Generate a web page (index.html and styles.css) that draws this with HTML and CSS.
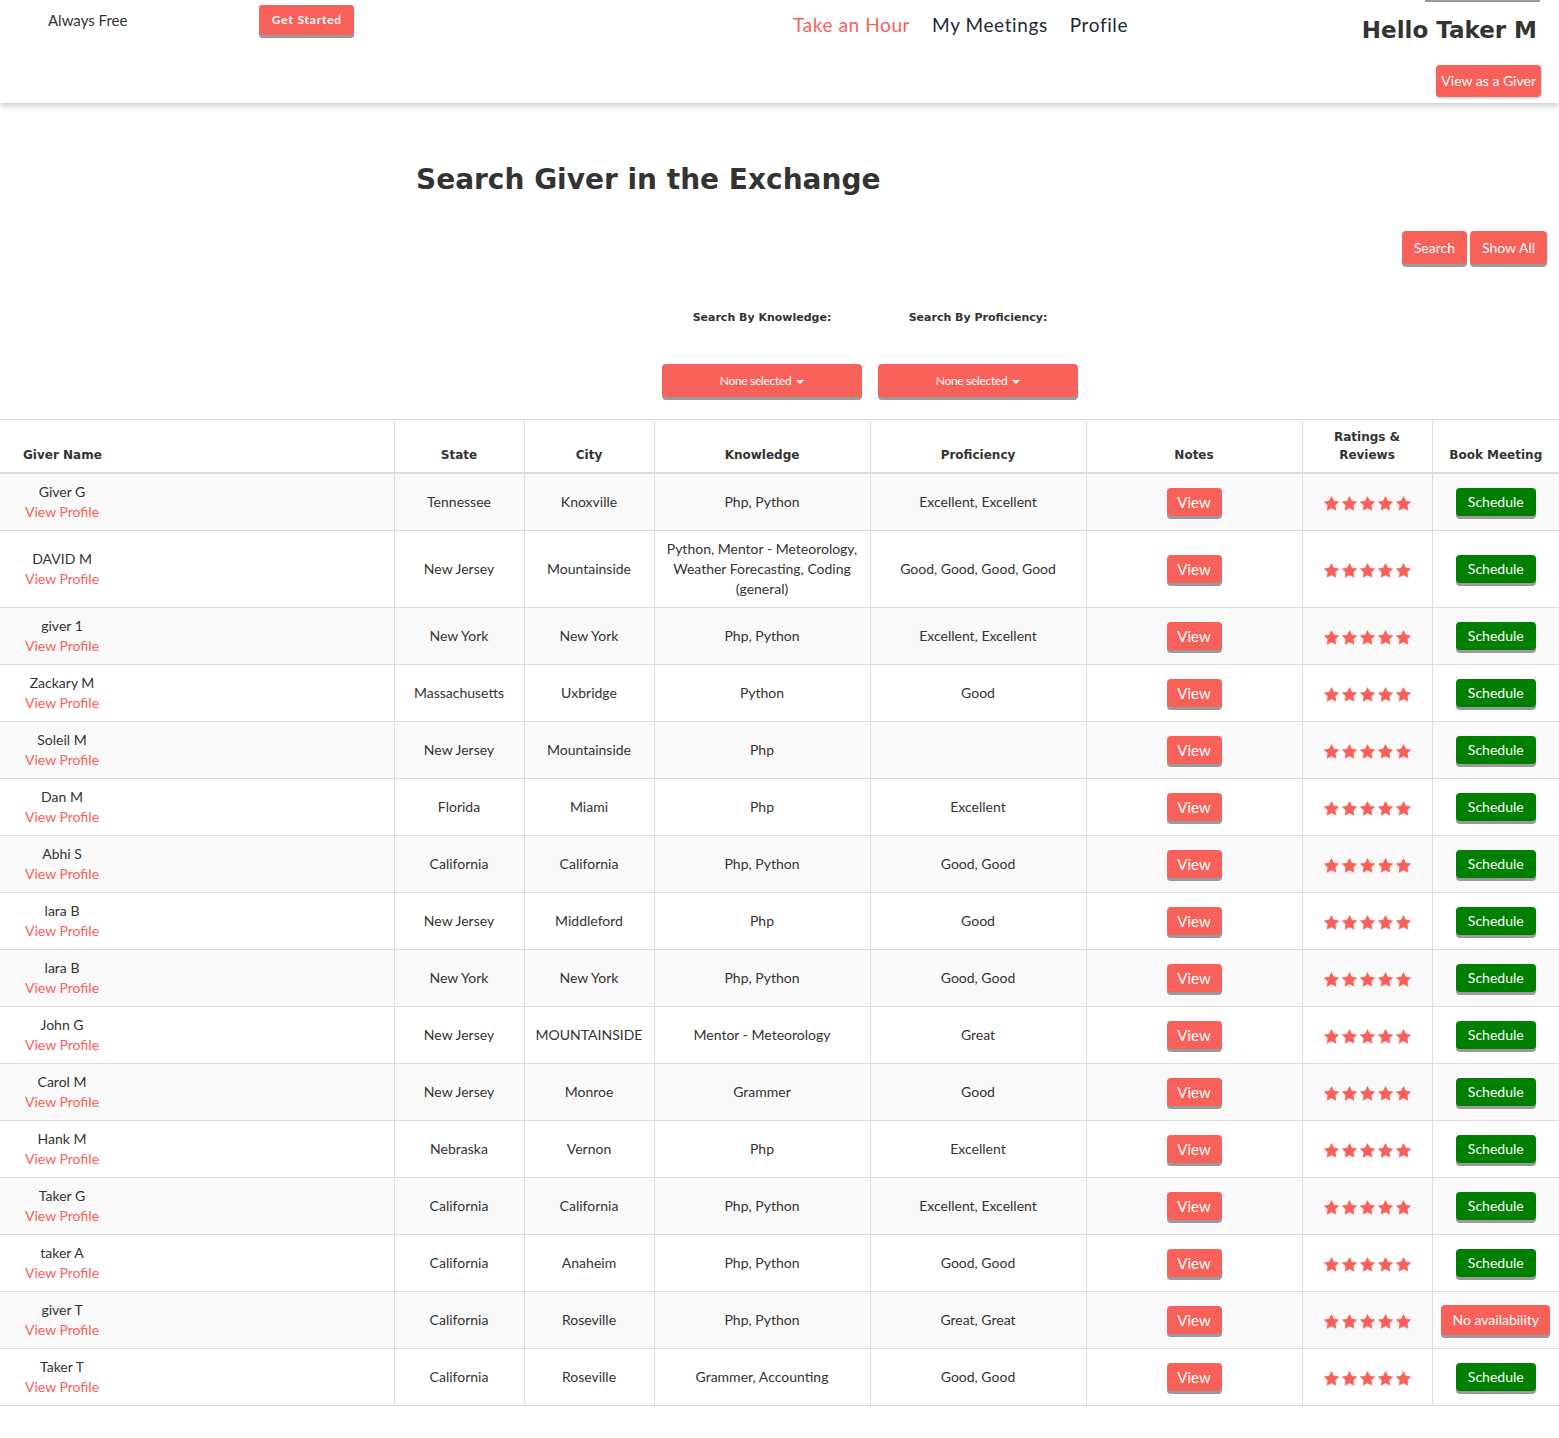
FILE: index.html
```html
<!DOCTYPE html>
<html lang="en">
<head>
<meta charset="utf-8">
<title>Search Giver in the Exchange</title>
<link rel="stylesheet" href="styles.css">
</head>
<body>
<svg class="defs" width="0" height="0" aria-hidden="true">
  <symbol id="star" viewBox="0 0 24 24">
    <polygon points="12,0.8 15.65,7.98 23.6,9.24 17.9,14.92 19.2,22.9 12,19.2 4.8,22.9 6.1,14.92 0.4,9.24 8.35,7.98"/>
  </symbol>
</svg>
<header class="topbar">
  <div class="brand-area">
    <span class="always-free">Always Free</span>
    <a class="btn btn-start" href="#">Get Started</a>
  </div>
  <nav class="main-nav">
    <a class="nav-link active" href="#">Take an Hour</a>
    <a class="nav-link" href="#">My Meetings</a>
    <a class="nav-link" href="#">Profile</a>
  </nav>
  <div class="user-area">
    <div class="user-bar"></div>
    <h2 class="hello">Hello Taker M</h2>
    <a class="btn btn-giver" href="#">View as a Giver</a>
  </div>
</header>

<main>
  <h1 class="page-title">Search Giver in the Exchange</h1>
  <div class="search-actions">
    <a class="btn btn-action" href="#">Search</a>
    <a class="btn btn-action" href="#">Show All</a>
  </div>
  <div class="filters">
    <div class="filter">
      <label class="filter-label">Search By Knowledge:</label>
      <button class="dropdown">None selected <span class="caret"></span></button>
    </div>
    <div class="filter">
      <label class="filter-label">Search By Proficiency:</label>
      <button class="dropdown">None selected <span class="caret"></span></button>
    </div>
  </div>

  <table class="givers">
    <colgroup>
      <col class="c-name"><col class="c-state"><col class="c-city"><col class="c-know"><col class="c-prof"><col class="c-notes"><col class="c-rate"><col class="c-book">
    </colgroup>
    <thead>
      <tr>
        <th class="th-name">Giver Name</th>
        <th>State</th>
        <th>City</th>
        <th>Knowledge</th>
        <th>Proficiency</th>
        <th>Notes</th>
        <th>Ratings &amp;<br>Reviews</th>
        <th>Book Meeting</th>
      </tr>
    </thead>
    <tbody>
      <tr><td class="name"><div class="name-box">Giver G<br><a href="#">View Profile</a></div></td><td>Tennessee</td><td>Knoxville</td><td>Php, Python</td><td>Excellent, Excellent</td><td><a class="btn btn-view" href="#">View</a></td><td><span class="stars"><svg><use href="#star"/></svg><svg><use href="#star"/></svg><svg><use href="#star"/></svg><svg><use href="#star"/></svg><svg><use href="#star"/></svg></span></td><td><a class="btn btn-schedule" href="#">Schedule</a></td></tr>
      <tr><td class="name"><div class="name-box">DAVID M<br><a href="#">View Profile</a></div></td><td>New Jersey</td><td>Mountainside</td><td>Python, Mentor - Meteorology, Weather Forecasting, Coding (general)</td><td>Good, Good, Good, Good</td><td><a class="btn btn-view" href="#">View</a></td><td><span class="stars"><svg><use href="#star"/></svg><svg><use href="#star"/></svg><svg><use href="#star"/></svg><svg><use href="#star"/></svg><svg><use href="#star"/></svg></span></td><td><a class="btn btn-schedule" href="#">Schedule</a></td></tr>
      <tr><td class="name"><div class="name-box">giver 1<br><a href="#">View Profile</a></div></td><td>New York</td><td>New York</td><td>Php, Python</td><td>Excellent, Excellent</td><td><a class="btn btn-view" href="#">View</a></td><td><span class="stars"><svg><use href="#star"/></svg><svg><use href="#star"/></svg><svg><use href="#star"/></svg><svg><use href="#star"/></svg><svg><use href="#star"/></svg></span></td><td><a class="btn btn-schedule" href="#">Schedule</a></td></tr>
      <tr><td class="name"><div class="name-box">Zackary M<br><a href="#">View Profile</a></div></td><td>Massachusetts</td><td>Uxbridge</td><td>Python</td><td>Good</td><td><a class="btn btn-view" href="#">View</a></td><td><span class="stars"><svg><use href="#star"/></svg><svg><use href="#star"/></svg><svg><use href="#star"/></svg><svg><use href="#star"/></svg><svg><use href="#star"/></svg></span></td><td><a class="btn btn-schedule" href="#">Schedule</a></td></tr>
      <tr><td class="name"><div class="name-box">Soleil M<br><a href="#">View Profile</a></div></td><td>New Jersey</td><td>Mountainside</td><td>Php</td><td></td><td><a class="btn btn-view" href="#">View</a></td><td><span class="stars"><svg><use href="#star"/></svg><svg><use href="#star"/></svg><svg><use href="#star"/></svg><svg><use href="#star"/></svg><svg><use href="#star"/></svg></span></td><td><a class="btn btn-schedule" href="#">Schedule</a></td></tr>
      <tr><td class="name"><div class="name-box">Dan M<br><a href="#">View Profile</a></div></td><td>Florida</td><td>Miami</td><td>Php</td><td>Excellent</td><td><a class="btn btn-view" href="#">View</a></td><td><span class="stars"><svg><use href="#star"/></svg><svg><use href="#star"/></svg><svg><use href="#star"/></svg><svg><use href="#star"/></svg><svg><use href="#star"/></svg></span></td><td><a class="btn btn-schedule" href="#">Schedule</a></td></tr>
      <tr><td class="name"><div class="name-box">Abhi S<br><a href="#">View Profile</a></div></td><td>California</td><td>California</td><td>Php, Python</td><td>Good, Good</td><td><a class="btn btn-view" href="#">View</a></td><td><span class="stars"><svg><use href="#star"/></svg><svg><use href="#star"/></svg><svg><use href="#star"/></svg><svg><use href="#star"/></svg><svg><use href="#star"/></svg></span></td><td><a class="btn btn-schedule" href="#">Schedule</a></td></tr>
      <tr><td class="name"><div class="name-box">lara B<br><a href="#">View Profile</a></div></td><td>New Jersey</td><td>Middleford</td><td>Php</td><td>Good</td><td><a class="btn btn-view" href="#">View</a></td><td><span class="stars"><svg><use href="#star"/></svg><svg><use href="#star"/></svg><svg><use href="#star"/></svg><svg><use href="#star"/></svg><svg><use href="#star"/></svg></span></td><td><a class="btn btn-schedule" href="#">Schedule</a></td></tr>
      <tr><td class="name"><div class="name-box">lara B<br><a href="#">View Profile</a></div></td><td>New York</td><td>New York</td><td>Php, Python</td><td>Good, Good</td><td><a class="btn btn-view" href="#">View</a></td><td><span class="stars"><svg><use href="#star"/></svg><svg><use href="#star"/></svg><svg><use href="#star"/></svg><svg><use href="#star"/></svg><svg><use href="#star"/></svg></span></td><td><a class="btn btn-schedule" href="#">Schedule</a></td></tr>
      <tr><td class="name"><div class="name-box">John G<br><a href="#">View Profile</a></div></td><td>New Jersey</td><td>MOUNTAINSIDE</td><td>Mentor - Meteorology</td><td>Great</td><td><a class="btn btn-view" href="#">View</a></td><td><span class="stars"><svg><use href="#star"/></svg><svg><use href="#star"/></svg><svg><use href="#star"/></svg><svg><use href="#star"/></svg><svg><use href="#star"/></svg></span></td><td><a class="btn btn-schedule" href="#">Schedule</a></td></tr>
      <tr><td class="name"><div class="name-box">Carol M<br><a href="#">View Profile</a></div></td><td>New Jersey</td><td>Monroe</td><td>Grammer</td><td>Good</td><td><a class="btn btn-view" href="#">View</a></td><td><span class="stars"><svg><use href="#star"/></svg><svg><use href="#star"/></svg><svg><use href="#star"/></svg><svg><use href="#star"/></svg><svg><use href="#star"/></svg></span></td><td><a class="btn btn-schedule" href="#">Schedule</a></td></tr>
      <tr><td class="name"><div class="name-box">Hank M<br><a href="#">View Profile</a></div></td><td>Nebraska</td><td>Vernon</td><td>Php</td><td>Excellent</td><td><a class="btn btn-view" href="#">View</a></td><td><span class="stars"><svg><use href="#star"/></svg><svg><use href="#star"/></svg><svg><use href="#star"/></svg><svg><use href="#star"/></svg><svg><use href="#star"/></svg></span></td><td><a class="btn btn-schedule" href="#">Schedule</a></td></tr>
      <tr><td class="name"><div class="name-box">Taker G<br><a href="#">View Profile</a></div></td><td>California</td><td>California</td><td>Php, Python</td><td>Excellent, Excellent</td><td><a class="btn btn-view" href="#">View</a></td><td><span class="stars"><svg><use href="#star"/></svg><svg><use href="#star"/></svg><svg><use href="#star"/></svg><svg><use href="#star"/></svg><svg><use href="#star"/></svg></span></td><td><a class="btn btn-schedule" href="#">Schedule</a></td></tr>
      <tr><td class="name"><div class="name-box">taker A<br><a href="#">View Profile</a></div></td><td>California</td><td>Anaheim</td><td>Php, Python</td><td>Good, Good</td><td><a class="btn btn-view" href="#">View</a></td><td><span class="stars"><svg><use href="#star"/></svg><svg><use href="#star"/></svg><svg><use href="#star"/></svg><svg><use href="#star"/></svg><svg><use href="#star"/></svg></span></td><td><a class="btn btn-schedule" href="#">Schedule</a></td></tr>
      <tr><td class="name"><div class="name-box">giver T<br><a href="#">View Profile</a></div></td><td>California</td><td>Roseville</td><td>Php, Python</td><td>Great, Great</td><td><a class="btn btn-view" href="#">View</a></td><td><span class="stars"><svg><use href="#star"/></svg><svg><use href="#star"/></svg><svg><use href="#star"/></svg><svg><use href="#star"/></svg><svg><use href="#star"/></svg></span></td><td><a class="btn btn-none" href="#">No availability</a></td></tr>
      <tr><td class="name"><div class="name-box">Taker T<br><a href="#">View Profile</a></div></td><td>California</td><td>Roseville</td><td>Grammer, Accounting</td><td>Good, Good</td><td><a class="btn btn-view" href="#">View</a></td><td><span class="stars"><svg><use href="#star"/></svg><svg><use href="#star"/></svg><svg><use href="#star"/></svg><svg><use href="#star"/></svg><svg><use href="#star"/></svg></span></td><td><a class="btn btn-schedule" href="#">Schedule</a></td></tr>
    </tbody>
  </table>
</main>
</body>
</html>
```

FILE: styles.css
```css
* { box-sizing: border-box; }

html, body {
  margin: 0;
  padding: 0;
  background: #fff;
}

body {
  font-family: Lato, "Liberation Sans", sans-serif;
  font-size: 14px;
  color: #333;
  line-height: 20px;
}

.defs { position: absolute; width: 0; height: 0; }

a { text-decoration: none; }

.btn {
  display: inline-block;
  background: #f8615a;
  color: #fff;
  border-radius: 4px;
  box-shadow: 0 3px 0 #9a9a9a;
  text-align: center;
  white-space: nowrap;
}

/* ---------- header ---------- */
.topbar {
  display: flex;
  align-items: flex-start;
  height: 103px;
  background: #fff;
  box-shadow: 0 3px 6px rgba(0, 0, 0, 0.2);
  position: relative;
  z-index: 1;
}

.brand-area {
  width: 793px;
  display: flex;
  align-items: flex-start;
  padding-left: 48px;
}

.always-free {
  font-size: 15px;
  line-height: 20px;
  margin-top: 10px;
  color: #333;
}

.btn-start {
  margin-left: 132px;
  margin-top: 5px;
  height: 30px;
  line-height: 30px;
  width: 95px;
  font-size: 12px;
  font-weight: 700;
  letter-spacing: 0.8px;
  border-radius: 3px;
}

.main-nav {
  display: flex;
  gap: 22px;
  margin-top: 13px;
}

.nav-link {
  font-size: 19px;
  line-height: 24px;
  letter-spacing: 0.6px;
  color: #1c2a3a;
}

.nav-link.active { color: #f8615a; }

.user-area {
  margin-left: auto;
  padding-right: 18px;
  display: flex;
  flex-direction: column;
  align-items: flex-end;
}

.user-bar {
  width: 115px;
  height: 2px;
  background: #9a9a9a;
  margin-right: 1px;
}

.hello {
  margin: 12px 4px 0 0;
  font-family: "DejaVu Sans", sans-serif;
  font-weight: 700;
  font-size: 23px;
  line-height: 32px;
  color: #333;
}

.btn-giver {
  margin-top: 19px;
  height: 32px;
  line-height: 32px;
  padding: 0 5px;
  font-size: 14px;
  box-shadow: 0 1px 2px rgba(0, 0, 0, 0.25);
}

/* ---------- search area ---------- */
.page-title {
  margin: 58px 0 0 0;
  padding-left: 416px;
  font-family: "DejaVu Sans", sans-serif;
  font-weight: 700;
  font-size: 28px;
  line-height: 38px;
  color: #333;
}

.search-actions {
  display: flex;
  justify-content: flex-end;
  gap: 3px;
  padding-right: 12px;
  margin-top: 32px;
}

.btn-action {
  height: 33px;
  line-height: 33px;
  padding: 0 12px;
  font-size: 14px;
}

.filters {
  display: flex;
  gap: 16px;
  padding-left: 662px;
  margin-top: 46px;
}

.filter {
  width: 200px;
  display: flex;
  flex-direction: column;
  align-items: center;
}

.filter-label {
  font-family: "DejaVu Sans", sans-serif;
  font-weight: 700;
  font-size: 11px;
  line-height: 16px;
  color: #333;
}

.dropdown {
  margin-top: 38px;
  width: 200px;
  height: 33px;
  border: 0;
  border-radius: 4px;
  background: #f8615a;
  color: #fff;
  font-family: Lato, "Liberation Sans", sans-serif;
  font-size: 12px;
  letter-spacing: -0.3px;
  box-shadow: 0 3px 0 #9a9a9a;
  padding: 0;
}

.caret {
  display: inline-block;
  width: 0;
  height: 0;
  margin-left: 2px;
  vertical-align: middle;
  border-top: 4px solid #fff;
  border-left: 4px solid transparent;
  border-right: 4px solid transparent;
}

/* ---------- table ---------- */
.givers {
  width: 100%;
  margin-top: 22px;
  border-collapse: collapse;
  border-top: 1px solid #ddd;
  border-bottom: 1px solid #ddd;
  table-layout: fixed;
}

.c-name { width: 394px; }
.c-state { width: 130px; }
.c-city { width: 130px; }
.c-know { width: 216px; }
.c-prof { width: 216px; }
.c-notes { width: 216px; }
.c-rate { width: 130px; }
.c-book { width: 127px; }

.givers th {
  font-family: "DejaVu Sans", sans-serif;
  font-weight: 700;
  font-size: 12px;
  line-height: 18px;
  color: #333;
  padding: 8px;
  vertical-align: bottom;
  text-align: center;
  border-bottom: 2px solid #ddd;
  border-left: 1px solid #ddd;
}

.givers th.th-name {
  text-align: left;
  padding-left: 23px;
  border-left: 0;
}

.givers td {
  padding: 8px;
  border-top: 1px solid #ddd;
  border-left: 1px solid #ddd;
  text-align: center;
  vertical-align: middle;
  line-height: 20px;
}

.givers td.name {
  text-align: left;
  padding-left: 25px;
  border-left: 0;
}

.givers tbody tr:nth-child(odd) { background: #f9f9f9; }

.name-box {
  display: inline-block;
  text-align: center;
}

.name-box a { color: #f8615a; }

.btn-view {
  height: 28px;
  line-height: 28px;
  width: 55px;
  font-size: 15px;
}

.btn-schedule {
  height: 28px;
  line-height: 28px;
  width: 80px;
  font-size: 14px;
  background: #008000;
}

.btn-none {
  height: 30px;
  line-height: 30px;
  padding: 0 11px;
  font-size: 14px;
}

.stars {
  display: inline-flex;
  gap: 3px;
  vertical-align: middle;
}

.stars svg {
  width: 15px;
  height: 15px;
  fill: #f8615a;
  stroke: #f8615a;
  stroke-width: 0.8;
  stroke-linejoin: round;
}
```
